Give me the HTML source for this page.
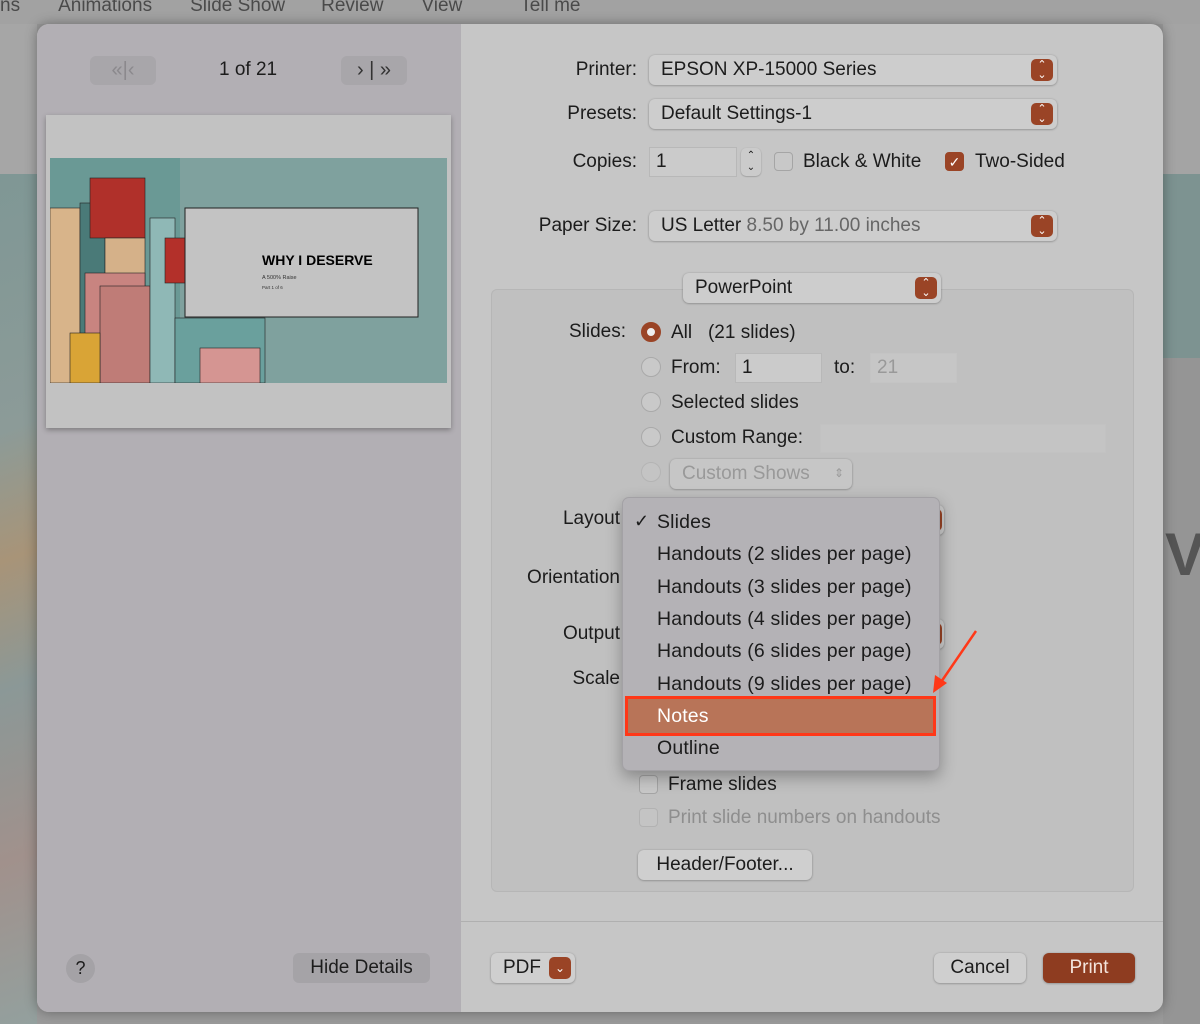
<!DOCTYPE html>
<html><head><meta charset="utf-8"><style>
*{box-sizing:border-box;margin:0;padding:0}
body{width:1200px;height:1024px;overflow:hidden;position:relative;background:#9a9a9a;font-family:"Liberation Sans",sans-serif;color:#1c1c1c;font-size:19px}
.a{position:absolute}
.lbl{position:absolute;text-align:right;white-space:nowrap}
.pop{position:absolute;height:30px;border-radius:6px;background:#cdcdcd;box-shadow:0 0.5px 2px rgba(0,0,0,.35);padding:4px 12px;white-space:nowrap}
.stp{position:absolute;right:4px;top:4px;width:22px;height:22px;border-radius:5px;background:#9a4426;color:#fff;font-size:11px;line-height:10px;text-align:center;padding-top:1px}
.rad{position:absolute;width:20px;height:20px;border-radius:50%;background:#c9c9c9;border:1px solid #a9a9a9}
.fld{position:absolute;background:#cbcbcb;border:1px solid #b8b8b8;height:30px;padding:3px 6px}
.cb{position:absolute;width:19px;height:19px;border-radius:4px;border:1px solid #a5a5a5;background:#c8c8c8}
.btn{position:absolute;height:30px;border-radius:6px;background:#cfcfcf;box-shadow:0 0.5px 2px rgba(0,0,0,.35);text-align:center;line-height:30px}
.mi{position:absolute;left:657px;white-space:nowrap;font-size:19.5px;letter-spacing:.15px}
</style></head><body>
<div class="a" style="left:0;top:0;width:1200px;height:24px;background:#a2a2a2"></div>
<div class="a" style="left:0;top:-5px;font-size:19px;color:#4a4a4a;white-space:nowrap">ns<span style="margin-left:38px">Animations</span><span style="margin-left:38px">Slide Show</span><span style="margin-left:36px">Review</span><span style="margin-left:38px">View</span><span style="margin-left:58px">Tell me</span></div>
<div class="a" style="left:0;top:24px;width:37px;height:150px;background:#a6a6a6"></div>
<div class="a" style="left:0;top:174px;width:37px;height:850px;background:linear-gradient(160deg,#7f9795 0%,#8c9b98 30%,#a89478 45%,#8b9897 60%,#a1918c 80%,#93a09e 100%)"></div>
<div class="a" style="left:1163px;top:24px;width:37px;height:150px;background:#a4a4a4"></div>
<div class="a" style="left:1163px;top:174px;width:37px;height:184px;background:#7d9391"></div>
<div class="a" style="left:1163px;top:358px;width:37px;height:666px;background:#959595"></div>
<div class="a" style="left:1165px;top:520px;font-size:60px;font-weight:bold;color:#555">V</div>
<div class="a" style="left:37px;top:24px;width:1126px;height:988px;border-radius:12px;overflow:hidden;background:#c6c6c6;box-shadow:0 0 12px rgba(0,0,0,.35)">
 <div class="a" style="left:0;top:0;width:424px;height:988px;background:#b2afb4"></div>
 <div class="a" style="left:424px;top:897px;width:702px;height:1px;background:#b0b0b0"></div>
</div>
<div class="a" style="left:90px;top:56px;width:66px;height:29px;border-radius:6px;background:#a8a6aa;color:#8b898d;text-align:center;line-height:28px;font-size:20px">«|‹</div>
<div class="a" style="left:219px;top:59px;font-size:19px">1 of 21</div>
<div class="a" style="left:341px;top:56px;width:66px;height:29px;border-radius:6px;background:#a8a6aa;color:#333;text-align:center;line-height:28px;font-size:20px">›&nbsp;|&nbsp;»</div>
<div class="a" style="left:46px;top:115px;width:405px;height:313px;background:#c2c2c2;box-shadow:0 2px 5px rgba(0,0,0,.3)"></div>
<div class="a" style="left:50px;top:158px;width:397px;height:225px;background:#7fa19e;overflow:hidden">
 <svg width="397" height="225" style="position:absolute;left:0;top:0">
  <rect x="0" y="0" width="130" height="225" fill="#6a9995"/>
  <rect x="0" y="50" width="30" height="175" fill="#d8b48a" stroke="#222" stroke-width=".6"/>
  <rect x="30" y="45" width="25" height="150" fill="#4a7a78" stroke="#222" stroke-width=".6"/>
  <rect x="40" y="20" width="55" height="60" fill="#b0302a" stroke="#222" stroke-width=".6"/>
  <rect x="55" y="80" width="40" height="120" fill="#d5b189" stroke="#222" stroke-width=".6"/>
  <rect x="35" y="115" width="60" height="110" fill="#c88480" stroke="#222" stroke-width=".6"/>
  <rect x="50" y="128" width="50" height="97" fill="#bf7c77" stroke="#222" stroke-width=".6"/>
  <rect x="100" y="60" width="25" height="165" fill="#8fb8b6" stroke="#222" stroke-width=".6"/>
  <rect x="115" y="80" width="50" height="45" fill="#b3302a" stroke="#222" stroke-width=".6"/>
  <rect x="125" y="160" width="90" height="65" fill="#6aa09d" stroke="#222" stroke-width=".6"/>
  <rect x="150" y="190" width="60" height="35" fill="#d59592" stroke="#222" stroke-width=".6"/>
  <rect x="20" y="175" width="30" height="50" fill="#d9a436" stroke="#222" stroke-width=".6"/>
  <rect x="135" y="50" width="233" height="109" fill="#c3c3c3" stroke="#222" stroke-width="1"/>
  <text x="212" y="107" font-family="Liberation Sans" font-weight="bold" font-size="14" fill="#000">WHY I DESERVE</text>
  <text x="212" y="121" font-family="Liberation Sans" font-size="5.5" fill="#333">A 500% Raise</text>
  <text x="212" y="131" font-family="Liberation Sans" font-size="4.5" fill="#333">Part 1 of 6</text>
 </svg>
</div>
<div class="lbl" style="right:563px;top:59px">Printer:</div>
<div class="pop" style="left:649px;top:55px;width:408px">EPSON XP-15000 Series<div class="stp">⌃<br>⌄</div></div>
<div class="lbl" style="right:563px;top:103px">Presets:</div>
<div class="pop" style="left:649px;top:99px;width:408px">Default Settings-1<div class="stp">⌃<br>⌄</div></div>
<div class="lbl" style="right:563px;top:151px">Copies:</div>
<div class="fld" style="left:649px;top:147px;width:88px">1</div>
<div class="a" style="left:741px;top:148px;width:20px;height:28px;border-radius:5px;background:#cbcbcb;box-shadow:0 .5px 1.5px rgba(0,0,0,.3);font-size:10px;text-align:center;line-height:12px;padding-top:2px">⌃<br>⌄</div>
<div class="cb" style="left:774px;top:152px"></div>
<div class="a" style="left:803px;top:151px">Black &amp; White</div>
<div class="cb" style="left:945px;top:152px;background:#9a4426;border-color:#9a4426;color:#fff;font-size:14px;text-align:center;line-height:18px">✓</div>
<div class="a" style="left:975px;top:151px">Two-Sided</div>
<div class="lbl" style="right:563px;top:215px">Paper Size:</div>
<div class="pop" style="left:649px;top:211px;width:408px">US Letter <span style="color:#666">8.50 by 11.00 inches</span><div class="stp">⌃<br>⌄</div></div>
<div class="a" style="left:491px;top:289px;width:643px;height:603px;border-radius:6px;background:#c0c0c0;border:1px solid #b6b6b6"></div>
<div class="pop" style="left:683px;top:273px;width:258px">PowerPoint<div class="stp">⌃<br>⌄</div></div>
<div class="lbl" style="right:574px;top:321px">Slides:</div>
<div class="rad" style="left:641px;top:322px;border:6px solid #9a4426;background:#eee"></div>
<div class="a" style="left:671px;top:322px">All&nbsp;&nbsp;&nbsp;(21 slides)</div>
<div class="rad" style="left:641px;top:357px"></div>
<div class="a" style="left:671px;top:357px">From:</div>
<div class="fld" style="left:735px;top:353px;width:87px">1</div>
<div class="a" style="left:834px;top:357px">to:</div>
<div class="fld" style="left:870px;top:353px;width:87px;color:#999;border-color:#c4c4c4;background:#c6c6c6">21</div>
<div class="rad" style="left:641px;top:392px"></div>
<div class="a" style="left:671px;top:392px">Selected slides</div>
<div class="rad" style="left:641px;top:427px"></div>
<div class="a" style="left:671px;top:427px">Custom Range:</div>
<div class="fld" style="left:820px;top:424px;width:286px;height:29px;background:#c4c4c4;border-color:#c2c2c2"></div>
<div class="rad" style="left:641px;top:462px;opacity:.5"></div>
<div class="pop" style="left:670px;top:459px;width:182px;color:#999;background:#c6c6c6">Custom Shows <span style="position:absolute;right:8px;font-size:12px;top:7px">⇕</span></div>
<div class="lbl" style="right:580px;top:508px">Layout</div>
<div class="pop" style="left:900px;top:505px;width:44px"><div class="stp" style="right:2px"></div></div>
<div class="lbl" style="right:580px;top:567px">Orientation</div>
<div class="lbl" style="right:580px;top:623px">Output</div>
<div class="pop" style="left:900px;top:619px;width:44px"><div class="stp" style="right:2px"></div></div>
<div class="lbl" style="right:580px;top:668px">Scale</div>
<div class="cb" style="left:639px;top:775px"></div>
<div class="a" style="left:668px;top:774px">Frame slides</div>
<div class="cb" style="left:639px;top:808px;opacity:.5"></div>
<div class="a" style="left:668px;top:807px;color:#8e8e8e">Print slide numbers on handouts</div>
<div class="btn" style="left:638px;top:850px;width:174px">Header/Footer...</div>
<div class="a" style="left:622px;top:497px;width:318px;height:274px;border-radius:7px;background:#b4b2b6;border:1px solid #a3a1a5;box-shadow:0 6px 16px rgba(0,0,0,.3)"></div>
<div class="a" style="left:634px;top:511px;font-size:18px">✓</div>
<div class="mi" style="top:511px">Slides</div>
<div class="mi" style="top:543px">Handouts (2 slides per page)</div>
<div class="mi" style="top:576px">Handouts (3 slides per page)</div>
<div class="mi" style="top:608px">Handouts (4 slides per page)</div>
<div class="mi" style="top:640px">Handouts (6 slides per page)</div>
<div class="mi" style="top:673px">Handouts (9 slides per page)</div>
<div class="a" style="left:625px;top:696px;width:311px;height:40px;background:#b87458;border:3px solid #ff3818"></div>
<div class="mi" style="top:705px;color:#fff">Notes</div>
<div class="mi" style="top:737px">Outline</div>
<svg class="a" style="left:925px;top:625px" width="60" height="75"><line x1="51" y1="6" x2="14" y2="60" stroke="#ff3818" stroke-width="2.5"/><polygon points="8,68 10,50 22,58" fill="#ff3818"/></svg>
<div class="a" style="left:66px;top:954px;width:29px;height:29px;border-radius:50%;background:#a4a2a6;text-align:center;line-height:29px;font-size:18px">?</div>
<div class="a" style="left:293px;top:953px;width:137px;height:30px;border-radius:6px;background:#a5a3a7;text-align:center;line-height:30px">Hide Details</div>
<div class="btn" style="left:491px;top:953px;width:84px;text-align:left;padding-left:12px">PDF<div class="a" style="left:58px;top:4px;width:22px;height:22px;border-radius:5px;background:#9a4426;color:#fff;font-size:12px;line-height:22px;text-align:center">⌄</div></div>
<div class="btn" style="left:934px;top:953px;width:92px">Cancel</div>
<div class="btn" style="left:1043px;top:953px;width:92px;background:#8e3c20;color:#f3e4dc">Print</div>
</body></html>
